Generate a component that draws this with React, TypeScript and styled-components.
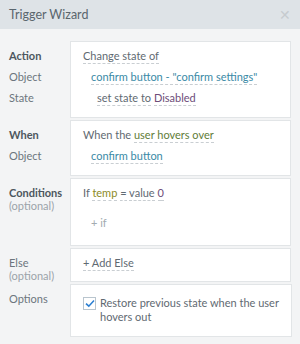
import React from 'react';
import styled, { createGlobalStyle } from 'styled-components';

const GlobalStyle = createGlobalStyle`
  html, body {
    margin: 0;
    padding: 0;
    background: #f3f4f5;
  }
  body {
    font-family: Lato, 'Open Sans', sans-serif;
    color: #5f6a72;
  }
`;

const Dialog = styled.div`
  width: 300px;
  height: 344px;
  background: #f3f4f5;
  display: flex;
  flex-direction: column;
  overflow: hidden;
`;

const Header = styled.div`
  height: 29px;
  flex: none;
  display: flex;
  align-items: center;
  justify-content: space-between;
  padding: 0 9px;
  background: #dee3e7;
`;

const Title = styled.span`
  font-size: 12.5px;
  color: #5a666e;
`;

const Close = styled.span`
  font-size: 14px;
  color: #c6cbcf;
  line-height: 1;
`;

const Sections = styled.div`
  display: flex;
  flex-direction: column;
  gap: 2px;
  padding: 12px 9px 0 9px;
`;

const Row = styled.div`
  display: grid;
  grid-template-columns: 61px 1fr;
`;

const LabelColumn = styled.div`
  display: flex;
  flex-direction: column;
  padding-top: 4px;
`;

const Label = styled.div<{ $main?: boolean }>`
  font-size: 11px;
  line-height: 21px;
  font-weight: ${p => (p.$main ? 700 : 400)};
  color: ${p => (p.$main ? '#4d575e' : '#6c767d')};
`;

const Optional = styled.div`
  font-size: 11px;
  line-height: 12px;
  margin-top: -3px;
  color: #9ba3a9;
`;

const Panel = styled.div<{ $pad?: string }>`
  background: #fff;
  border: 1px solid #e2e5e7;
  padding: ${p => p.$pad || '3px 12px 9px'};
  font-size: 11px;
`;

const Line = styled.div<{ $indent?: number; $gap?: number }>`
  line-height: 21px;
  padding-left: ${p => p.$indent || 0}px;
  margin-top: ${p => p.$gap || 0}px;
  white-space: nowrap;
`;

const Token = styled.span<{ $color?: string }>`
  color: ${p => p.$color || 'inherit'};
  border-bottom: 1px dashed #c9ced2;
  padding-bottom: 1px;
`;

const Muted = styled.span`
  color: #a3abb0;
`;

const CheckRow = styled.label`
  display: flex;
  gap: 4px;
  align-items: flex-start;
`;

const Box = styled.span`
  flex: none;
  width: 11px;
  height: 11px;
  margin-top: 1px;
  border: 1px solid #b9c5ce;
  background: #fff;
  display: flex;
  align-items: center;
  justify-content: center;
`;

const CheckText = styled.span`
  font-size: 11px;
  line-height: 14px;
  color: #5f6a72;
  white-space: nowrap;
`;

const teal = '#3a8aa6';
const olive = '#5f7d38';
const purple = '#6d4d79';
const mustard = '#8c8a25';

export default function App() {
  return (
    <Dialog>
      <GlobalStyle />
      <Header>
        <Title>Trigger Wizard</Title>
        <Close>✕</Close>
      </Header>
      <Sections>
        <Row>
          <LabelColumn>
            <Label $main>Action</Label>
            <Label>Object</Label>
            <Label>State</Label>
          </LabelColumn>
          <Panel>
            <Line>
              <Token>Change state of</Token>
            </Line>
            <Line $indent={8}>
              <Token $color={teal}>confirm button - "confirm settings"</Token>
            </Line>
            <Line $indent={14}>
              <Token>set state to</Token> <Token $color={purple}>Disabled</Token>
            </Line>
          </Panel>
        </Row>
        <Row>
          <LabelColumn>
            <Label $main>When</Label>
            <Label>Object</Label>
          </LabelColumn>
          <Panel>
            <Line>
              When the <Token $color={olive}>user hovers over</Token>
            </Line>
            <Line $indent={8}>
              <Token $color={teal}>confirm button</Token>
            </Line>
          </Panel>
        </Row>
        <Row>
          <LabelColumn>
            <Label $main>Conditions</Label>
            <Optional>(optional)</Optional>
          </LabelColumn>
          <Panel $pad="3px 12px 12px">
            <Line>
              If <Token $color={mustard}>temp</Token> <Token>=</Token>{' '}
              <Token>value</Token> <Token $color={purple}>0</Token>
            </Line>
            <Line $indent={8} $gap={9}>
              <Muted>+ if</Muted>
            </Line>
          </Panel>
        </Row>
        <Row>
          <LabelColumn>
            <Label>Else</Label>
            <Optional>(optional)</Optional>
          </LabelColumn>
          <Panel $pad="3px 12px 8px">
            <Line>
              <Token>+ Add Else</Token>
            </Line>
          </Panel>
        </Row>
        <Row>
          <LabelColumn>
            <Label>Options</Label>
          </LabelColumn>
          <Panel $pad="11px 12px 12px">
            <CheckRow>
              <Box>
                <svg width="10" height="9" viewBox="0 0 10 9">
                  <path d="M1 4.6 L3.8 7.2 L9 1.5" fill="none" stroke="#2b7fd2" strokeWidth="1.6" />
                </svg>
              </Box>
              <CheckText>
                Restore previous state when the user
                <br />
                hovers out
              </CheckText>
            </CheckRow>
          </Panel>
        </Row>
      </Sections>
    </Dialog>
  );
}
